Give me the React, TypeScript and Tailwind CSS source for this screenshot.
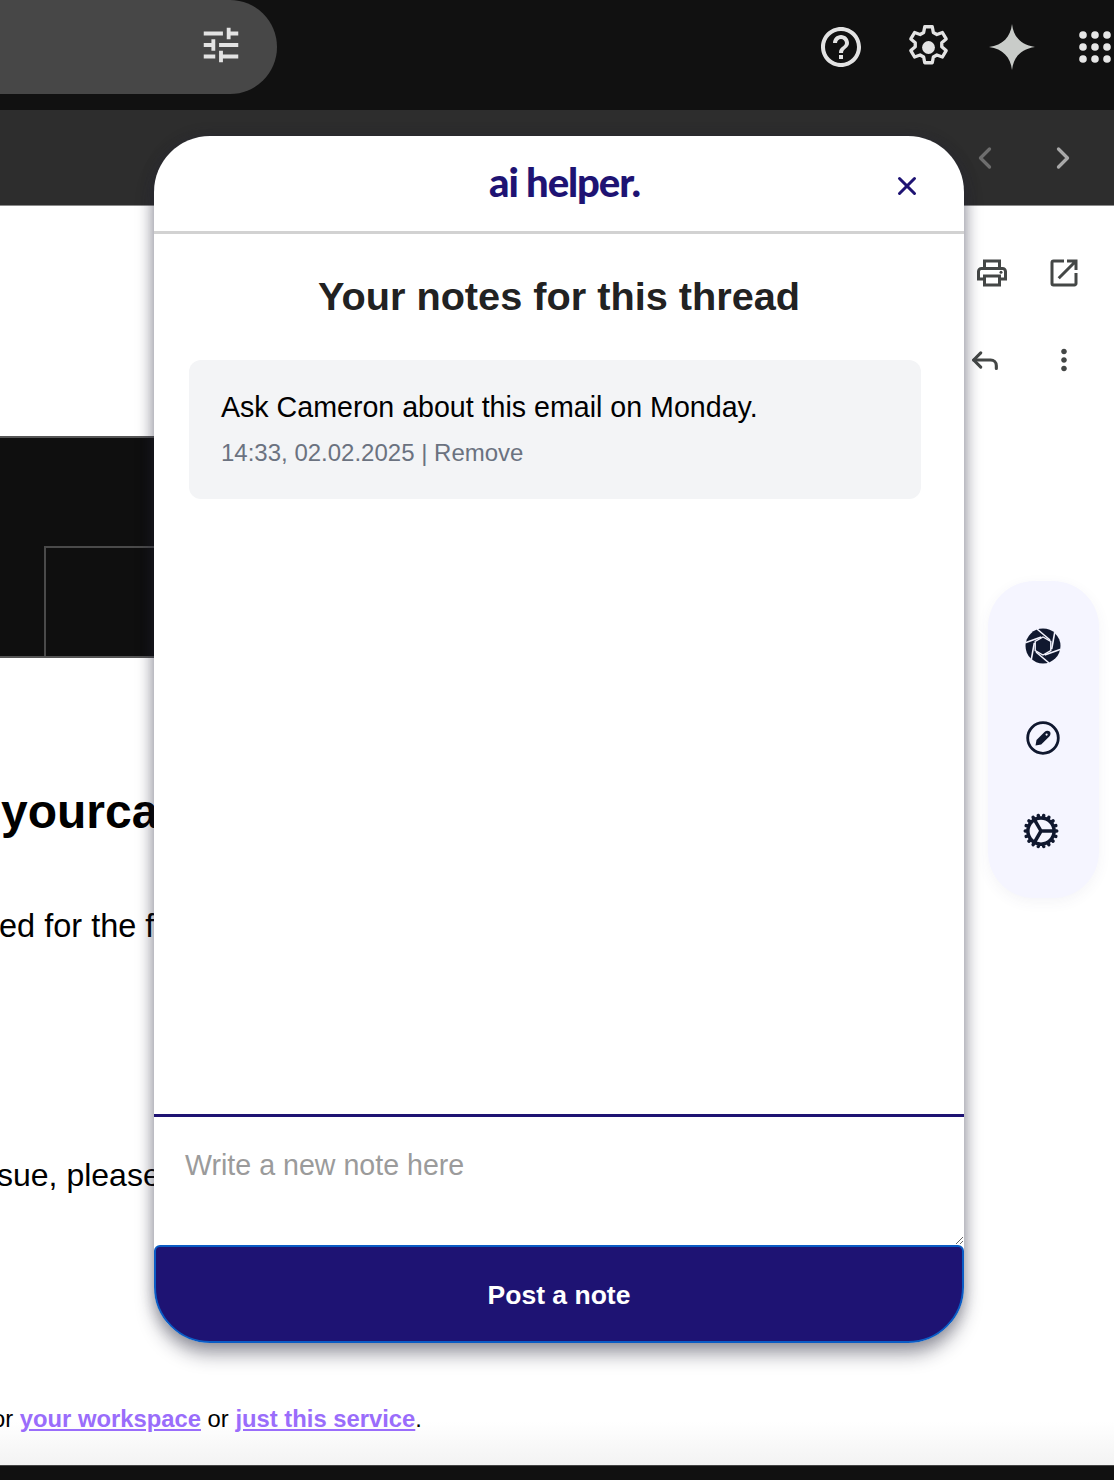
import { Reply, X, ChevronLeft, ChevronRight } from 'lucide-react';
import { MdHelpOutline, MdMoreVert, MdOutlineOpenInNew, MdOutlinePrint, MdTune } from 'react-icons/md';
import { HiOutlineCog } from 'react-icons/hi2';

const sans = "font-['Liberation_Sans',Arial,sans-serif]";

function GearIcon() {
  return (
    <svg width="53" height="53" viewBox="0 0 24 24" fill="none" stroke="#e3e3e3" strokeWidth="1.5" strokeLinejoin="round">
      <path d="M10.3 2.6h3.4l.5 2.6 1.6.9 2.5-.9 1.7 2.9-2 1.7v1.9l2 1.7-1.7 2.9-2.5-.9-1.6.9-.5 2.6h-3.4l-.5-2.6-1.6-.9-2.5.9-1.7-2.9 2-1.7v-1.9l-2-1.7 1.7-2.9 2.5.9 1.6-.9z" />
      <circle cx="12" cy="12" r="2.9" fill="#e3e3e3" stroke="none" />
    </svg>
  );
}

function SparkIcon() {
  return (
    <svg width="46" height="46" viewBox="0 0 46 46" fill="#c9ccc9">
      <path d="M23 0C24.5 13 32 21 46 23C32 25 24.5 33 23 46C21.5 33 14 25 0 23C14 21 21.5 13 23 0Z" />
    </svg>
  );
}

function AppsIcon() {
  const dots = [4, 16, 28];
  return (
    <svg width="34" height="32" viewBox="0 0 34 32" fill="#e6e6e6">
      {dots.map((y) => dots.map((x) => <circle key={`${x}-${y}`} cx={x} cy={y} r="3.8" />))}
    </svg>
  );
}

// dark disc, white hexagon round the centre, one blade line per corner
function ApertureIcon() {
  const angles = [0, 60, 120, 180, 240, 300];
  return (
    <svg width="36" height="36" viewBox="0 0 36 36">
      <circle cx="18" cy="18" r="17.5" fill="#10182f" />
      {angles.map((a) => (
        <line key={a} x1="25" y1="12" x2="12" y2="1" stroke="#f5f5ff" strokeWidth="1.6" transform={`rotate(${a} 18 18)`} />
      ))}
      <polygon points="18,9 25.8,13.5 25.8,22.5 18,27 10.2,22.5 10.2,13.5" fill="#10182f" stroke="#f5f5ff" strokeWidth="1.4" />
    </svg>
  );
}

function PenCircleIcon() {
  return (
    <svg width="34" height="34" viewBox="0 0 34 34" fill="none">
      <circle cx="17" cy="17" r="15.3" stroke="#10182f" strokeWidth="2.8" />
      <path d="M9.5 24.5L10.5 19L18.5 11C20 9.5 22.5 9.6 23.7 10.6C24.9 11.8 24.8 14 23.3 15.5L15.2 23.6Z" fill="#10182f" />
      <circle cx="20.6" cy="13.6" r="1.1" fill="#f5f5ff" />
    </svg>
  );
}

function NotesPanel() {
  return (
    <div className="absolute left-[154px] top-[136px] flex h-[1207px] w-[810px] flex-col rounded-[56px] bg-white shadow-[0_12px_18px_rgba(30,30,50,0.38),0_0_14px_rgba(40,40,60,0.3)]">
      <header className="relative flex h-[98px] shrink-0 items-center justify-center border-b-[3px] border-[#d2d2d2]">
        <span className="mt-[-4px] ml-[11px] font-['Lato',sans-serif] text-[40px] font-black leading-none tracking-[-1.1px] text-[#1e1373]">
          ai helper.
        </span>
        <X className="absolute right-[42px] top-[35px] text-[#1e1373]" size={30} strokeWidth={2.4} />
      </header>
      <div className={`flex-1 px-[35px] ${sans}`}>
        <h1 className="mt-[37px] text-center text-[39.7px] font-bold leading-[50px] text-[#222222]">
          Your notes for this thread
        </h1>
        <div className="mt-[39px] h-[139px] w-[732px] rounded-[12px] bg-[#f3f4f6] px-[32px] pt-[28px]">
          <p className="text-[28.6px] leading-[38px] text-black">Ask Cameron about this email on Monday.</p>
          <p className="mt-[12px] text-[24px] leading-[30px] text-[#6b7280]">14:33, 02.02.2025 | Remove</p>
        </div>
      </div>
      <div className="flex h-[131px] shrink-0 border-t-[3px] border-[#1e1373]">
        <textarea
          placeholder="Write a new note here"
          className={`h-full w-full px-[31px] pt-[30px] text-[28.6px] leading-[36px] outline-none placeholder:text-[#9b9b9b] ${sans}`}
        />
      </div>
      <button className={`h-[98px] shrink-0 rounded-t-[6px] rounded-b-[56px] border-2 border-[#0a5cc5] bg-[#1e1373] pt-[3px] text-[26.5px] font-bold text-white ${sans}`}>
        Post a note
      </button>
    </div>
  );
}

export default function App() {
  return (
    <div className={`relative flex h-[1480px] w-[1114px] flex-col overflow-hidden bg-white ${sans}`}>
      <div className="flex h-[110px] shrink-0 items-start justify-between bg-[#111111]">
        <div className="flex h-[94px] w-[277px] items-center justify-end rounded-r-[47px] bg-[#474747] pr-[33px]">
          <MdTune size={46} color="#e3e3e3" className="mb-[5px]" />
        </div>
        <div className="flex h-[94px] items-center pr-[1px]">
          <MdHelpOutline size={48} color="#e3e3e3" className="mr-[37px]" />
          <span className="mt-[1px]">
            <GearIcon />
          </span>
          <span className="ml-[34px] mr-[44px]">
            <SparkIcon />
          </span>
          <AppsIcon />
        </div>
      </div>

      <div className="flex h-[96px] shrink-0 items-center justify-end gap-[42px] border-b border-[#8a8a8a] bg-[#2d2d2d] pr-[33px]">
        <ChevronLeft size={36} color="#6e6e6e" strokeWidth={2.2} />
        <ChevronRight size={36} color="#a8a8a8" strokeWidth={2.2} />
      </div>

      <div className="flex flex-1 flex-col">
        <div className="mt-[49px] flex justify-end gap-[36px] pr-[32px] text-[#444746]">
          <MdOutlinePrint size={36} />
          <MdOutlineOpenInNew size={36} />
        </div>
        <div className="mt-[52px] flex justify-end gap-[45px] pr-[33px] text-[#444746]">
          <Reply size={34} strokeWidth={2.2} />
          <MdMoreVert size={34} />
        </div>
        <div className="mt-[59px] flex h-[222px] w-[300px] flex-col justify-end border-y-2 border-[#555555] bg-[#0f0f0f]">
          <div className="ml-[44px] h-[110px] border-t-2 border-l-2 border-[#4a4a4a]" />
        </div>
        <h2 className="mt-[128px] whitespace-nowrap pl-[1px] text-[48px] font-bold leading-[52px] text-black">yourcalendar</h2>
        <p className="mt-[68px] -ml-[1px] whitespace-nowrap text-[32.5px] leading-[40px] text-black">ed for the first time</p>
        <p className="mt-[209px] -ml-[3px] whitespace-nowrap text-[32px] leading-[40px] text-black">sue, please contact</p>
        <div className="mt-auto flex h-[62px] items-start bg-gradient-to-b from-white from-[30%] to-[#f3f3f3]">
          <p className="-ml-[8px] mt-[1px] whitespace-nowrap text-[23.8px] leading-[30px] text-black">
            or <a className="font-bold text-[#9a6dfb] underline">your workspace</a> or{' '}
            <a className="font-bold text-[#9a6dfb] underline">just this service</a>.
          </p>
        </div>
      </div>
      <div className="h-[15px] shrink-0 border-t border-[#444444] bg-[#111111]" />

      <NotesPanel />

      <aside className="absolute left-[988px] top-[581px] flex h-[317px] w-[111px] flex-col items-center gap-[57px] rounded-[46px] bg-[#f5f5ff] pt-[47px] pr-[2px] shadow-[0_4px_14px_rgba(60,60,120,0.06)]">
        <ApertureIcon />
        <PenCircleIcon />
        <HiOutlineCog size={42} color="#10182f" strokeWidth={2} className="-mt-[2px] -ml-[4px]" />
      </aside>
    </div>
  );
}
